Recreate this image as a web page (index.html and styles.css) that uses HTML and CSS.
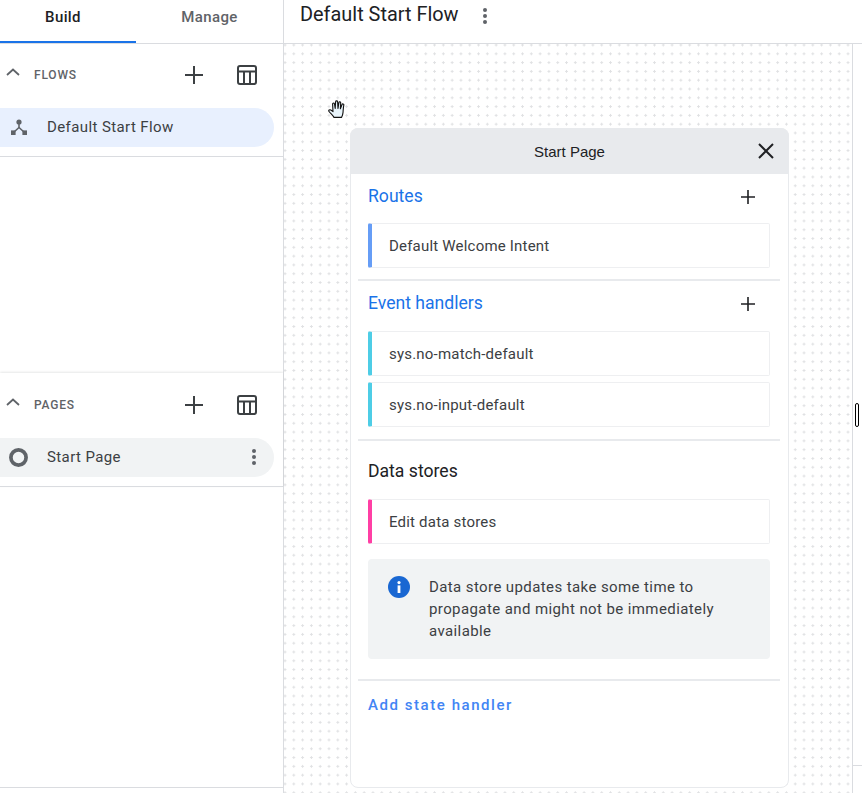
FILE: index.html
```html
<!DOCTYPE html>
<html lang="en">
<head>
  <meta charset="UTF-8">
  <title>Default Start Flow</title>
  <link rel="stylesheet" href="styles.css">
</head>
<body>
  <div class="app">
    <aside class="sidebar">
      <div class="tabs">
        <div class="tab active">Build</div>
        <div class="tab">Manage</div>
      </div>

      <section class="section flows">
        <div class="section-head">
          <svg class="chevron" viewBox="0 0 14 8"><path d="M1 7 L7 1.5 L13 7" fill="none" stroke="#5f6368" stroke-width="1.8"/></svg>
          <span class="section-title">FLOWS</span>
          <svg class="head-icon plus" viewBox="0 0 20 20"><path d="M10 1v18M1 10h18" stroke="#3c4043" stroke-width="2"/></svg>
          <svg class="head-icon table" viewBox="0 0 20 20"><rect x="1" y="1" width="18" height="18" rx="2" fill="none" stroke="#3c4043" stroke-width="2"/><path d="M1 6.5h18M7 6.5V19M13 6.5V19" fill="none" stroke="#3c4043" stroke-width="2"/></svg>
        </div>
        <div class="nav-item selected">
          <svg class="nav-icon" viewBox="0 0 18 18"><circle cx="9" cy="4" r="2.6" fill="#5f6368"/><rect x="1" y="12.4" width="4.6" height="4.6" fill="#5f6368"/><rect x="12.4" y="12.4" width="4.6" height="4.6" fill="#5f6368"/><path d="M9 5v4.5M9 9.5L4 14M9 9.5L14 14" fill="none" stroke="#5f6368" stroke-width="1.6"/></svg>
          <span>Default Start Flow</span>
        </div>
      </section>

      <section class="section pages">
        <div class="section-head">
          <svg class="chevron" viewBox="0 0 14 8"><path d="M1 7 L7 1.5 L13 7" fill="none" stroke="#5f6368" stroke-width="1.8"/></svg>
          <span class="section-title">PAGES</span>
          <svg class="head-icon plus" viewBox="0 0 20 20"><path d="M10 1v18M1 10h18" stroke="#3c4043" stroke-width="2"/></svg>
          <svg class="head-icon table" viewBox="0 0 20 20"><rect x="1" y="1" width="18" height="18" rx="2" fill="none" stroke="#3c4043" stroke-width="2"/><path d="M1 6.5h18M7 6.5V19M13 6.5V19" fill="none" stroke="#3c4043" stroke-width="2"/></svg>
        </div>
        <div class="nav-item current">
          <svg class="nav-icon ring" viewBox="0 0 19 19"><circle cx="9.5" cy="9.5" r="7.6" fill="none" stroke="#5f6368" stroke-width="3.7"/></svg>
          <span>Start Page</span>
          <svg class="kebab" viewBox="0 0 4 16"><circle cx="2" cy="2" r="2" fill="#5f6368"/><circle cx="2" cy="8" r="2" fill="#5f6368"/><circle cx="2" cy="14" r="2" fill="#5f6368"/></svg>
        </div>
      </section>

      <div class="side-foot"></div>
    </aside>

    <main class="main">
      <header class="topbar">
        <h1>Default Start Flow</h1>
        <svg class="kebab" viewBox="0 0 4 16"><circle cx="2" cy="2" r="2" fill="#5f6368"/><circle cx="2" cy="8" r="2" fill="#5f6368"/><circle cx="2" cy="14" r="2" fill="#5f6368"/></svg>
      </header>

      <div class="body">
        <div class="canvas">
          <svg class="hand" viewBox="0 0 18 18"><path d="M6 17.4 C5 15.5 2.5 13.5 1 11.5 C0.2 10.4 1.6 9.2 2.8 10 L5 11.6 L4.6 4 C4.6 2.7 6.3 2.7 6.5 4 L7.2 8.4 L7.6 1.8 C7.7 0.6 9.5 0.6 9.6 1.8 L10 8.4 L10.9 2.6 C11.1 1.4 12.8 1.6 12.7 2.9 L12.4 8.8 L14 4.6 C14.4 3.4 16.1 3.9 15.8 5.1 C15.2 7.6 15.2 10.5 15 12.6 C14.9 14.6 14.2 16 13.5 17.4 Z" fill="#e8f4fb" stroke="#111" stroke-width="1.1" stroke-linejoin="round"/></svg>

          <div class="card">
            <div class="card-head">
              <span>Start Page</span>
              <svg class="close" viewBox="0 0 16 16"><path d="M1 1L15 15M15 1L1 15" stroke="#202124" stroke-width="2"/></svg>
            </div>

            <div class="card-section routes">
              <div class="group-head">
                <span class="link-title">Routes</span>
                <svg class="add" viewBox="0 0 16 16"><path d="M8 1v14M1 8h14" stroke="#202124" stroke-width="1.6"/></svg>
              </div>
              <div class="row blue">Default Welcome Intent</div>
            </div>

            <div class="card-section events">
              <div class="group-head">
                <span class="link-title">Event handlers</span>
                <svg class="add" viewBox="0 0 16 16"><path d="M8 1v14M1 8h14" stroke="#202124" stroke-width="1.6"/></svg>
              </div>
              <div class="row cyan">sys.no-match-default</div>
              <div class="row cyan">sys.no-input-default</div>
            </div>

            <div class="card-section stores">
              <div class="plain-title">Data stores</div>
              <div class="row pink">Edit data stores</div>
              <div class="notice">
                <svg class="info" viewBox="0 0 22 22"><circle cx="11" cy="11" r="11" fill="#1967d2"/><rect x="9.6" y="9.4" width="2.8" height="7.6" fill="#fff"/><circle cx="11" cy="6.6" r="1.6" fill="#fff"/></svg>
                <p>Data store updates take some time to propagate and might not be immediately available</p>
              </div>
            </div>

            <div class="add-handler">Add state handler</div>
          </div>
        </div>

        <div class="side-strip">
          <div class="grip"></div>
          <div class="strip-line"></div>
        </div>
      </div>
    </main>
  </div>
</body>
</html>
```

FILE: styles.css
```css
* {
  box-sizing: border-box;
  margin: 0;
  padding: 0;
}

html,
body {
  height: 100%;
  overflow: hidden;
}

body {
  background-color: #fff;
  color: #3c4043;
  font-family: Roboto, sans-serif;
}

.app {
  display: flex;
  height: 793px;
}

/* Left column */
.sidebar {
  display: flex;
  flex-direction: column;
  width: 284px;
  flex: none;
  border-right: 1px solid #dadce0;
}

.tabs {
  display: flex;
  height: 44px;
  flex: none;
  border-bottom: 1px solid #dadce0;
}

.tab {
  width: 136px;
  height: 43px;
  padding-top: 9px;
  text-align: center;
  font-size: 15px;
  font-weight: 500;
  line-height: 16px;
  letter-spacing: 0.4px;
  color: #5f6368;
}

.tab.active {
  padding-right: 10px;
  color: #202124;
  border-bottom: 2px solid #1a73e8;
}

.tab + .tab {
  width: 147px;
}

.section {
  flex: none;
  border-bottom: 1px solid #dadce0;
}

.flows {
  height: 113px;
}

.pages {
  height: 114px;
  margin-top: 216px;
  box-shadow: 0 -1px 2px rgba(60, 64, 67, 0.12);
}

.section-head {
  display: flex;
  align-items: center;
  height: 64px;
  padding: 0 0 2px 6px;
}

.pages .section-head {
  height: 65px;
}

.chevron {
  width: 14px;
  height: 8px;
  margin-top: -6px;
}

.section-title {
  margin-left: 14px;
  font-size: 12px;
  font-weight: 500;
  letter-spacing: 0.8px;
  color: #5f6368;
}

.head-icon {
  width: 20px;
  height: 20px;
}

.plus {
  margin-left: auto;
}

.table {
  margin-left: 33px;
  margin-right: 26px;
}

.nav-item {
  display: flex;
  align-items: center;
  width: 274px;
  height: 39px;
  padding: 0 0 1px 10px;
  border-radius: 0 20px 20px 0;
  font-size: 15px;
  letter-spacing: 0.4px;
  color: #3c4043;
}

.nav-item span {
  margin-left: 19px;
}

.nav-icon {
  width: 18px;
  height: 18px;
  flex: none;
}

.ring {
  width: 19px;
  height: 19px;
  margin-left: -1px;
}

.selected {
  background-color: #e8f0fe;
}

.current {
  background-color: #f1f3f4;
}

.kebab {
  width: 4px;
  height: 16px;
  flex: none;
}

.nav-item .kebab {
  margin-left: auto;
  margin-right: 18px;
}

.side-foot {
  height: 6px;
  margin-top: auto;
  flex: none;
  border-top: 1px solid #dadce0;
}

/* Right column */
.main {
  flex: 1;
  min-width: 0;
}

.topbar {
  display: flex;
  align-items: center;
  height: 44px;
  padding: 0 0 13px 16px;
  border-bottom: 1px solid #dadce0;
}

.topbar h1 {
  font-size: 19.9px;
  font-weight: 400;
  line-height: 30px;
  color: #202124;
}

.topbar .kebab {
  margin: 2px 0 0 24px;
}

.body {
  display: flex;
  height: 749px;
}

.canvas {
  position: relative;
  width: 569px;
  flex: none;
  padding: 84px 0 0 66px;
  border-right: 1px solid #dadce0;
  background-color: #fff;
  background-image: radial-gradient(circle, #e0e1e3 1px, transparent 1.3px);
  background-size: 8.8px 8.8px;
  background-position: -3.4px -3.4px;
}

.hand {
  position: absolute;
  left: 44px;
  top: 56px;
  width: 18px;
  height: 18px;
}

.card {
  width: 439px;
  height: 660px;
  background-color: #fff;
  border: 1px solid #e8eaed;
  border-radius: 8px;
}

.card-head {
  display: flex;
  align-items: center;
  justify-content: center;
  position: relative;
  height: 46px;
  margin: -1px -1px 0;
  background-color: #e8eaed;
  border-radius: 8px 8px 0 0;
  font-family: "Liberation Sans", Arial, sans-serif;
  font-size: 15px;
  color: #202124;
}

.close {
  position: absolute;
  right: 15px;
  top: 15px;
  width: 16px;
  height: 16px;
}

.card-section {
  margin: 0 8px 0 7px;
  padding: 0 0 0 10px;
  border-bottom: 2px solid #e8eaed;
}

.routes {
  height: 107px;
}

.events {
  height: 160px;
}

.stores {
  height: 240px;
}

.group-head {
  display: flex;
  align-items: center;
  justify-content: space-between;
  height: 43px;
  padding: 0 24px 0 0;
  margin-bottom: 6px;
}

.events .group-head {
  margin-bottom: 7px;
}

.link-title {
  font-size: 17.6px;
  color: #1a73e8;
}

.add {
  width: 16px;
  height: 16px;
  margin-top: 2px;
}

.plain-title {
  font-size: 17.6px;
  line-height: 22px;
  padding-top: 19px;
  height: 58px;
  color: #202124;
}

.row {
  display: flex;
  align-items: center;
  width: 402px;
  height: 45px;
  padding-left: 17px;
  margin-bottom: 6px;
  border: 1px solid #eeeff1;
  border-left-width: 4px;
  border-radius: 2px;
  font-size: 15px;
  letter-spacing: 0.2px;
  color: #3c4043;
}

.blue {
  border-left-color: #669df6;
}

.cyan {
  border-left-color: #4ecde6;
}

.pink {
  border-left-color: #ff3fa4;
}

.notice {
  display: flex;
  width: 402px;
  height: 100px;
  margin-top: 15px;
  padding: 17px 30px 0 20px;
  background-color: #f1f3f4;
  border-radius: 4px;
}

.info {
  width: 22px;
  height: 22px;
  flex: none;
}

.notice p {
  margin-left: 19px;
  font-size: 15px;
  line-height: 22px;
  letter-spacing: 0.4px;
  color: #3c4043;
}

.add-handler {
  padding: 14px 0 0 17px;
  font-size: 15px;
  font-weight: 500;
  line-height: 20px;
  letter-spacing: 1.55px;
  color: #4285f4;
}

.side-strip {
  position: relative;
  flex: 1;
}

.grip {
  position: absolute;
  left: 2px;
  top: 359px;
  width: 4px;
  height: 24px;
  border: 1px solid #000;
  border-radius: 2px;
}

.strip-line {
  position: absolute;
  left: 0;
  right: 0;
  top: 721px;
  height: 1px;
  background-color: #dadce0;
}
```
